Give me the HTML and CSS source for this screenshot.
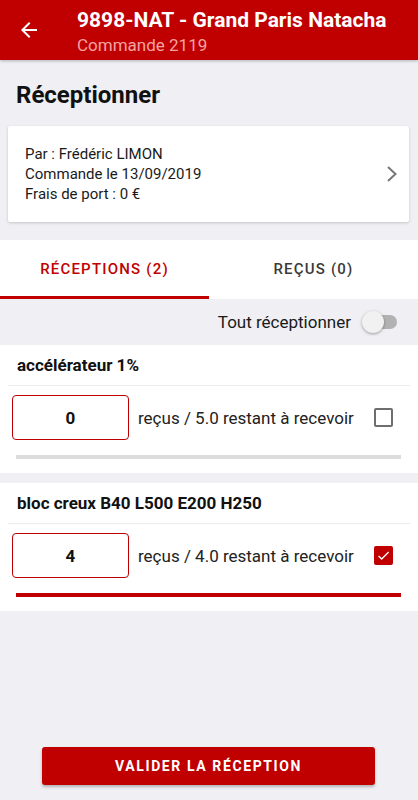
FILE: index.html
```html
<!DOCTYPE html>
<html lang="fr">
<head>
  <meta charset="UTF-8" />
  <meta name="viewport" content="width=device-width, initial-scale=1.0"/>
  <title>Réceptionner</title>
  <link rel="stylesheet" href="styles.css">
</head>
<body>
  <header class="topbar">
    <svg class="back" viewBox="0 0 24 24" width="24" height="24">
      <path d="M20 11H7.83l5.59-5.59L12 4l-8 8 8 8 1.41-1.41L7.83 13H20v-2z" fill="#fff"/>
    </svg>
    <div class="topbar-text">
      <div class="topbar-title">9898-NAT - Grand Paris Natacha</div>
      <div class="topbar-sub">Commande 2119</div>
    </div>
  </header>

  <main class="content">
    <h1 class="page-title">Réceptionner</h1>

    <div class="order-card">
      <div class="order-lines">
        <div>Par : Frédéric LIMON</div>
        <div>Commande le 13/09/2019</div>
        <div>Frais de port : 0 €</div>
      </div>
      <svg class="chevron" viewBox="0 0 12 18" width="12" height="18">
        <polyline points="2,2 9.5,9 2,16" fill="none" stroke="#777" stroke-width="2"/>
      </svg>
    </div>

    <nav class="tabs">
      <div class="tab active">RÉCEPTIONS (2)</div>
      <div class="tab">REÇUS (0)</div>
    </nav>

    <div class="toggle-row">
      <span>Tout réceptionner</span>
      <span class="switch"><span class="switch-thumb"></span></span>
    </div>

    <section class="item">
      <div class="item-title">accélérateur 1%</div>
      <div class="item-divider"></div>
      <div class="item-row">
        <div class="qty-box">0</div>
        <div class="qty-text">reçus / 5.0 restant à recevoir</div>
        <span class="check"></span>
      </div>
      <div class="bar"></div>
    </section>

    <section class="item">
      <div class="item-title">bloc creux B40 L500 E200 H250</div>
      <div class="item-divider"></div>
      <div class="item-row">
        <div class="qty-box">4</div>
        <div class="qty-text">reçus / 4.0 restant à recevoir</div>
        <span class="check checked">
          <svg viewBox="0 0 24 24" width="17" height="17">
            <path d="M9 16.17L4.83 12l-1.42 1.41L9 19 21 7l-1.41-1.41z" fill="#fff"/>
          </svg>
        </span>
      </div>
      <div class="bar done"></div>
    </section>
  </main>

  <div class="footer">
    <button class="validate">VALIDER LA RÉCEPTION</button>
  </div>
</body>
</html>
```

FILE: styles.css
```css
html, body {
  margin: 0;
  padding: 0;
  background: #efeff4;
  color: #1a1a1a;
  font-family: Roboto, 'Noto Sans', sans-serif;
}

body {
  height: 800px;
  display: flex;
  flex-direction: column;
  overflow: hidden;
}

.topbar {
  height: 60px;
  background: #c00000;
  display: flex;
  align-items: flex-start;
  padding-left: 17px;
  box-shadow: 0 1px 3px rgba(0, 0, 0, 0.25);
  position: relative;
  z-index: 1;
}

.back {
  margin-top: 18px;
  flex: none;
}

.topbar-text {
  margin-left: 36px;
  padding-top: 8px;
}

.topbar-title {
  color: #fff;
  font-size: 21px;
  font-weight: bold;
  line-height: 24px;
}

.topbar-sub {
  color: #f4a3a3;
  font-size: 17px;
  line-height: 20px;
  margin-top: 3px;
}

.content {
  flex: 1;
}

.page-title {
  margin: 0;
  padding: 21px 16px 17px;
  font-size: 24px;
  line-height: 28px;
  font-weight: bold;
  color: #111;
}

.order-card {
  margin: 0 9px 18px 8px;
  background: #fff;
  border-radius: 2px;
  box-shadow: 0 1px 3px rgba(0, 0, 0, 0.18);
  display: flex;
  align-items: center;
  padding: 18px 11px 18px 17px;
}

.order-lines {
  flex: 1;
  font-size: 15px;
  line-height: 20px;
  color: #1a1a1a;
}

.chevron {
  flex: none;
}

.tabs {
  display: flex;
  background: #fff;
}

.tab {
  flex: 1;
  text-align: center;
  height: 56px;
  line-height: 58px;
  font-size: 15px;
  font-weight: 500;
  letter-spacing: 1.2px;
  color: #3a3a3a;
  border-bottom: 3px solid transparent;
}

.tab.active {
  color: #c00000;
  border-bottom-color: #c00000;
}

.toggle-row {
  height: 46px;
  display: flex;
  align-items: center;
  justify-content: flex-end;
  padding-right: 21px;
  font-size: 17px;
  color: #1a1a1a;
}

.switch {
  margin-left: 12px;
  width: 34px;
  height: 14px;
  border-radius: 7px;
  background: #b2b2b2;
  position: relative;
}

.switch-thumb {
  position: absolute;
  left: -1px;
  top: -4px;
  width: 22px;
  height: 22px;
  border-radius: 50%;
  background: #f1f1f1;
  box-shadow: 0 1px 3px rgba(0, 0, 0, 0.35);
}

.item {
  background: #fff;
  margin-bottom: 10px;
  padding: 0 8px 14px;
}

.item-title {
  height: 40px;
  display: flex;
  align-items: center;
  padding: 0 9px;
  font-size: 17px;
  font-weight: bold;
  color: #111;
}

.item-divider {
  border-top: 1px solid #ececec;
}

.item-row {
  display: flex;
  align-items: center;
  padding: 9px 0 0 4px;
}

.qty-box {
  width: 115px;
  height: 43px;
  border: 1px solid #c00000;
  border-radius: 4px;
  display: flex;
  align-items: center;
  justify-content: center;
  font-size: 17px;
  font-weight: bold;
  color: #111;
}

.qty-text {
  margin-left: 9px;
  font-size: 17px;
  color: #222;
}

.check {
  margin-left: auto;
  margin-right: 17px;
  width: 15px;
  height: 15px;
  border: 2px solid #6e6e6e;
  border-radius: 2px;
  display: flex;
  align-items: center;
  justify-content: center;
}

.check.checked {
  background: #c00000;
  border-color: #c00000;
}

.bar {
  margin: 15px 9px 0 8px;
  height: 4px;
  background: #dcdcdc;
}

.bar.done {
  background: #c00000;
}

.footer {
  padding: 0 43px 15px 42px;
}

.validate {
  width: 100%;
  height: 38px;
  border: none;
  border-radius: 3px;
  background: #c00000;
  color: #fff;
  font-family: Roboto, 'Noto Sans', sans-serif;
  font-size: 14px;
  font-weight: bold;
  letter-spacing: 1.6px;
  box-shadow: 0 2px 3px rgba(0, 0, 0, 0.25);
}
```
